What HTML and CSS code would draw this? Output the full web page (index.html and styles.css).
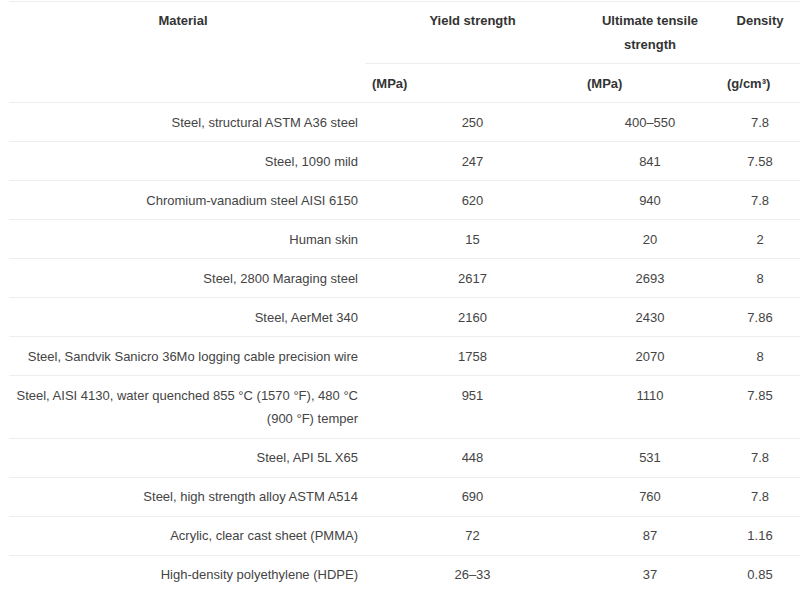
FILE: index.html
```html
<!DOCTYPE html>
<html>
<head>
<meta charset="utf-8">
<link rel="stylesheet" href="styles.css">
</head>
<body>
<table class="props">
  <colgroup>
    <col class="c1"><col class="c2"><col class="c3"><col class="c4">
  </colgroup>
  <thead>
    <tr>
      <th rowspan="2" class="top">Material</th>
      <th>Yield strength</th>
      <th>Ultimate tensile strength</th>
      <th>Density</th>
    </tr>
    <tr class="units">
      <th>(MPa)</th>
      <th>(MPa)</th>
      <th>(g/cm³)</th>
    </tr>
  </thead>
  <tbody>
    <tr><td class="mat">Steel, structural ASTM A36 steel</td><td>250</td><td>400–550</td><td>7.8</td></tr>
    <tr><td class="mat">Steel, 1090 mild</td><td>247</td><td>841</td><td>7.58</td></tr>
    <tr><td class="mat">Chromium-vanadium steel AISI 6150</td><td>620</td><td>940</td><td>7.8</td></tr>
    <tr><td class="mat">Human skin</td><td>15</td><td>20</td><td>2</td></tr>
    <tr><td class="mat">Steel, 2800 Maraging steel</td><td>2617</td><td>2693</td><td>8</td></tr>
    <tr><td class="mat">Steel, AerMet 340</td><td>2160</td><td>2430</td><td>7.86</td></tr>
    <tr><td class="mat">Steel, Sandvik Sanicro 36Mo logging cable precision wire</td><td>1758</td><td>2070</td><td>8</td></tr>
    <tr><td class="mat">Steel, AISI 4130, water quenched 855 °C (1570 °F), 480 °C (900 °F) temper</td><td>951</td><td>1110</td><td>7.85</td></tr>
    <tr><td class="mat">Steel, API 5L X65</td><td>448</td><td>531</td><td>7.8</td></tr>
    <tr><td class="mat">Steel, high strength alloy ASTM A514</td><td>690</td><td>760</td><td>7.8</td></tr>
    <tr><td class="mat">Acrylic, clear cast sheet (PMMA)</td><td>72</td><td>87</td><td>1.16</td></tr>
    <tr><td class="mat">High-density polyethylene (HDPE)</td><td>26–33</td><td>37</td><td>0.85</td></tr>
  </tbody>
</table>
</body>
</html>
```
FILE: styles.css
```css
html, body {
  margin: 0;
  padding: 0;
  background: #fff;
}
body {
  padding-top: 1px;
  font-family: "Liberation Sans", Arial, sans-serif;
  font-size: 13px;
  color: #444;
  overflow: hidden;
}
.props {
  margin-left: 9px;
  width: 791px;
  table-layout: fixed;
  border-collapse: collapse;
  border-top: 1px solid #eee;
  line-height: 23.4px;
}
.c1 { width: 356px; }
.c2 { width: 215px; }
.c3 { width: 140px; }
.c4 { width: 80px; }
.props th,
.props td {
  padding: 7.3px 8px;
  border-bottom: 1px solid #eee;
  vertical-align: top;
}
.props th {
  font-weight: bold;
  color: #333;
  text-align: center;
}
.props th.top {
  padding-left: 7px;
  padding-right: 15px;
}
.props .units th {
  text-align: left;
  padding-left: 7px;
}
.props td {
  text-align: center;
}
.props td.mat {
  text-align: right;
  padding-left: 5px;
  padding-right: 7px;
}
.props tbody tr:last-child td {
  border-bottom: none;
}
```
